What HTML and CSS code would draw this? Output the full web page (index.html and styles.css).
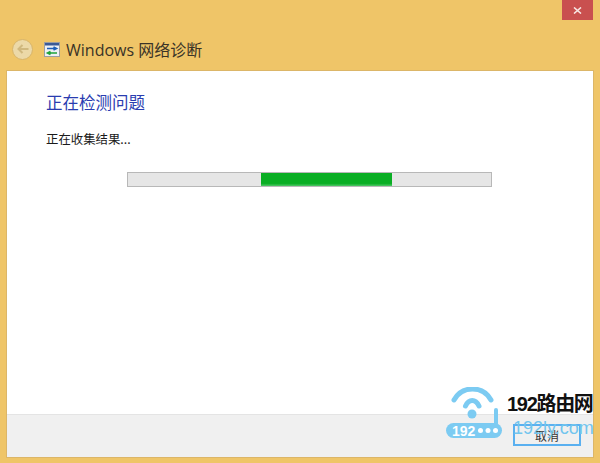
FILE: index.html
```html
<!DOCTYPE html>
<html lang="zh-CN">
<head>
  <meta charset="UTF-8" />
  <title>Windows 网络诊断</title>
  <link rel="stylesheet" href="styles.css">
</head>
<body>
  <div class="window">
    <div class="titlebar">
      <div class="close">
        <svg width="9" height="7" viewBox="0 0 9 7"><path d="M1 0.5 L8 6.5 M8 0.5 L1 6.5" stroke="#f7e6e3" stroke-width="1.6" fill="none"/></svg>
      </div>
    </div>
    <div class="nav">
      <div class="back">
        <svg width="12" height="10" viewBox="0 0 12 10"><path d="M5.5 1 L1.5 5 L5.5 9 M2 5 H11.5" stroke="#d0b87e" stroke-width="2" fill="none"/></svg>
      </div>
      <svg class="app-icon" width="16" height="15" viewBox="0 0 16 15">
        <rect x="0.5" y="0.5" width="15" height="14" fill="#eef1f4" stroke="#9a9ea3"/>
        <rect x="1" y="1" width="14" height="2.5" fill="#3a5a96"/>
        <path d="M3 6.5 H12 M9.5 5 L12.5 6.5 L9.5 8" stroke="#1d5fb8" stroke-width="1.6" fill="none"/>
        <path d="M13 11 H4 M6.5 9.5 L3.5 11 L6.5 12.5" stroke="#1fa33a" stroke-width="1.6" fill="none"/>
      </svg>
      <span class="app-title">Windows 网络诊断</span>
    </div>
    <div class="panel">
      <div class="content">
        <h1 class="heading">正在检测问题</h1>
        <p class="status">正在收集结果...</p>
        <div class="progress"><div class="progress-fill"></div></div>
      </div>
      <div class="footer">
        <button class="cancel">取消</button>
      </div>
    </div>
  </div>

  <div class="watermark">
    <svg class="wm-icon" width="60" height="56" viewBox="0 0 60 56">
      <g fill="none" stroke="#7ccbf2" stroke-width="5" stroke-linecap="round">
        <path d="M8 13 C16 -1.7 37 -1.7 45 13"/>
        <path d="M19.5 19 C23 11.7 29.5 11.7 33 19"/>
      </g>
      <circle cx="26" cy="27" r="4.5" fill="#7ccbf2"/>
      <rect x="48" y="21" width="4" height="18" rx="2" fill="#7ccbf2"/>
      <rect x="0" y="36" width="56" height="15" rx="7.5" fill="#7ccbf2"/>
      <circle cx="34.5" cy="43.5" r="2.5" fill="#fff"/>
      <circle cx="42" cy="43.5" r="2.5" fill="#fff"/>
      <circle cx="49.5" cy="43.5" r="2.5" fill="#fff"/>
      <text x="6" y="49" class="wm-num">192</text>
    </svg>
    <div class="wm-name">192路由网</div>
    <div class="wm-url">192ly.com</div>
  </div>
</body>
</html>
```

FILE: styles.css
```css
html, body {
  margin: 0;
  height: 100%;
}
body {
  position: relative;
  overflow: hidden;
  background: #efc568;
  font-family: "Noto Sans CJK SC", "Liberation Sans", sans-serif;
  color: #222;
}
.window {
  display: flex;
  flex-direction: column;
  height: 463px;
  box-sizing: border-box;
  padding: 0 7px 6px;
}
.titlebar {
  display: flex;
  justify-content: flex-end;
  height: 20px;
  flex-shrink: 0;
}
.close {
  display: flex;
  align-items: center;
  justify-content: center;
  width: 31px;
  height: 20px;
  background: #c9504f;
}
.nav {
  display: flex;
  align-items: center;
  height: 51px;
  flex-shrink: 0;
  padding: 7px 0 0 5px;
  box-sizing: border-box;
}
.back {
  display: flex;
  align-items: center;
  justify-content: center;
  width: 19px;
  height: 19px;
  border: 1px solid #d8b56a;
  border-radius: 50%;
  background: #ecd9a8;
  margin-right: 11px;
}
.app-icon {
  margin-right: 6px;
}
.app-title {
  font-size: 16px;
  color: #3a3327;
  font-family: "Open Sans", "Noto Sans CJK SC", sans-serif;
}
.panel {
  display: flex;
  flex-direction: column;
  flex: 1;
  background: #fff;
  box-shadow: 0 0 0 1px #dcb668;
}
.content {
  flex: 1;
  padding: 21px 0 0 39px;
}
.heading {
  margin: 0;
  font-size: 16.5px;
  font-weight: 400;
  line-height: 20px;
  color: #2a3cb0;
}
.status {
  margin: 18px 0 0;
  font-size: 12.4px;
  line-height: 18px;
  color: #1a1a1a;
}
.progress {
  width: 230px;
  height: 13px;
  margin: 24px 0 0 81px;
  padding-left: 133px;
  background: #e6e6e6;
  border: 1px solid #b8b8b8;
}
.progress-fill {
  width: 131px;
  height: 13px;
  background: linear-gradient(#0aae24 80%, #4fc766);
}
.footer {
  display: flex;
  justify-content: flex-end;
  align-items: flex-start;
  height: 43px;
  box-sizing: border-box;
  padding: 9px 12px 0 0;
  background: #f0f0f0;
  border-top: 1px solid #e4e4e4;
}
.cancel {
  width: 68px;
  height: 22px;
  padding: 0;
  font: inherit;
  font-size: 12px;
  color: #333;
  background: transparent;
  border: 2px solid #5ab0f0;
}
.watermark {
  position: absolute;
  left: 446px;
  top: 387px;
  width: 150px;
  height: 60px;
}
.wm-icon {
  position: absolute;
  left: 0;
  top: 0;
}
.wm-num {
  font-family: "Liberation Sans", sans-serif;
  font-size: 14px;
  font-weight: 700;
  fill: #fff;
}
.wm-name {
  position: absolute;
  left: 61px;
  top: 5px;
  font-family: "Liberation Sans", "Noto Sans CJK SC", sans-serif;
  font-size: 20px;
  letter-spacing: -1.3px;
  line-height: 24px;
  font-weight: 700;
  color: #111;
  white-space: nowrap;
}
.wm-url {
  position: absolute;
  left: 67px;
  top: 30px;
  font-family: "Liberation Sans", sans-serif;
  font-size: 18px;
  line-height: 22px;
  color: #72c5ee;
  white-space: nowrap;
}
```
